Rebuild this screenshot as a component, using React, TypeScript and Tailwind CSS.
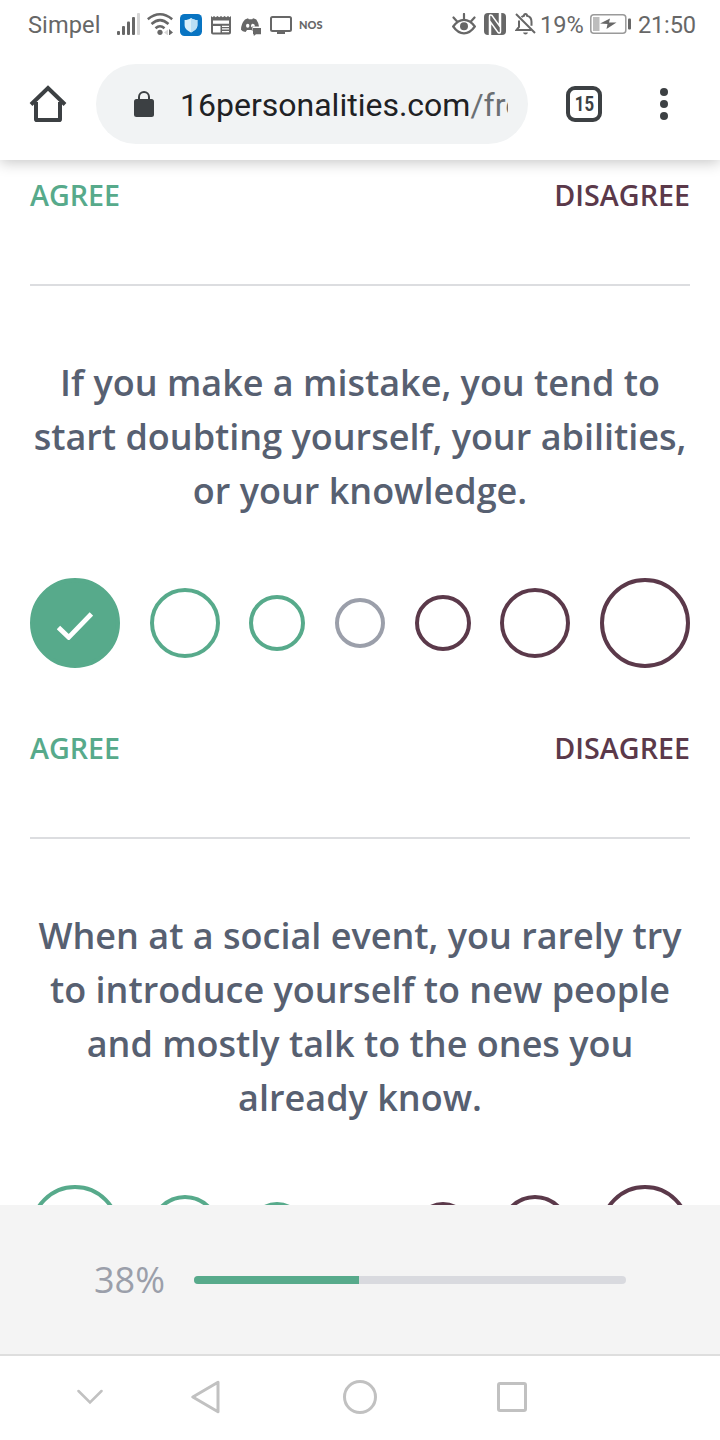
import React from "react";

type Choice = {
  size: string;
  color: string;
};

const choices: Choice[] = [
  { size: "size-[90px]", color: "border-[#57aa8b]" },
  { size: "size-[70px]", color: "border-[#57aa8b]" },
  { size: "size-[56px]", color: "border-[#57aa8b]" },
  { size: "size-[50px]", color: "border-[#9b9faa]" },
  { size: "size-[56px]", color: "border-[#5b394a]" },
  { size: "size-[70px]", color: "border-[#5b394a]" },
  { size: "size-[90px]", color: "border-[#5b394a]" },
];

const StatusBar = () => (
  <div className="flex h-[50px] items-center whitespace-nowrap pl-7 font-['Roboto',sans-serif] text-[23.6px] text-[#676767]">
    <span className="mt-0.5 w-[89px] tracking-[0.1px]">Simpel</span>
    {/* signal */}
    <svg className="w-[23px] h-[22px] shrink-0 -mt-0.5" viewBox="0 0 23 22" fill="#676767">
      <rect x="0" y="18" width="3" height="4" rx="1" />
      <rect x="5" y="13" width="3" height="9" rx="1" />
      <rect x="10" y="8.5" width="3" height="13.5" rx="1" />
      <rect x="15" y="4" width="3" height="18" rx="1" />
      <rect x="20" y="0" width="3" height="22" rx="1" fill="#d5d5d5" />
    </svg>
    {/* wifi */}
    <svg className="ml-[7px] w-[26px] h-[22px] shrink-0 -mt-0.5" viewBox="0 0 26 22" fill="none" stroke="#676767" strokeWidth="2.5">
      <path d="M.8 6.2Q13-3.600 25.2 6.2M4.5 11Q13 3.200 21.5 11M8.5 15.2Q13 11.200 17.5 15.2" />
      <circle cx="13" cy="19.3" r="2.6" fill="#676767" stroke="none" />
      <path d="M17 19.5l4-3v6z" fill="#d5d5d5" stroke="none" />
      <path d="M22 16l4 3.5-4 3z" fill="#676767" stroke="none" />
    </svg>
    {/* shield */}
    <svg className="ml-[7px] size-[22px] shrink-0" viewBox="0 0 22 22">
      <rect width="22" height="22" rx="4.5" fill="#0874c2" />
      <path d="M11 4c2 1.5 4 2 6.4 2v5c0 3.5-2.8 5.8-6.4 7.5C7.400 16.800 4.600 14.500 4.600 11V6C7 6 9 5.500 11 4z" fill="#d9f0fb" />
      <path d="M11 4c2 1.500 4 2 6.400 2v5c0 3.500-2.800 5.800-6.400 7.500z" fill="#b9dff5" />
    </svg>
    {/* news */}
    <svg className="ml-[9px] w-5 h-[19px] shrink-0" viewBox="0 0 20 19">
      <path d="M0 0l1.500 1.200L3 0l1.700 1.200L6.400 0l1.800 1.200L10 0l1.800 1.200L13.600 0l1.700 1.200L17 0l1.500 1.200L20 0v16.500q0 2-2 2H2q-2 0-2-2z" fill="#676767" />
      <path d="M2 4.500h16v3.300H2zM2 10h7.500v6.500H2zM11 9.800h7v1.300h-7zM11 12.300h7v1.300h-7zM11 14.900h7v1.300h-7z" fill="#fff" />
    </svg>
    {/* discord */}
    <svg className="ml-2.5 mt-1 w-5 h-[18px] shrink-0" viewBox="0 0 20 18" fill="#676767">
      <path d="M4 1.500L7 .2l.8 1h3.400l.9-1 3.200 1.200q2.400 3.400 2.700 7.100h-6.500v4.700l-1-1.200H6L4.600 14Q1.300 13.500 0 11.800 0 5.700 4 1.500z" />
      <ellipse cx="6.700" cy="7.700" rx="1.700" ry="2" fill="#fff" />
      <path d="M10 9.500q-.3-3.700 1.800-3.700t2.200 2.700h-3z" fill="#fff" />
      <path d="M12 10h8v6.300h-5L12.800 18v-1.700H12z" />
    </svg>
    {/* screen */}
    <svg className="ml-[9px] w-[22px] h-[18px] shrink-0" viewBox="0 0 22 18" fill="none">
      <rect x="1" y="1" width="20" height="14" rx="1.500" stroke="#676767" strokeWidth="2" />
      <path d="M7 15h8v3H7z" fill="#676767" />
    </svg>
    <span className="ml-[7px] w-[153px] font-['Lato',sans-serif] text-[11px] font-black">NOS</span>
    {/* eye comfort */}
    <svg className="w-6 h-[22px] shrink-0 -mt-0.5" viewBox="0 0 24 22" fill="none" stroke="#676767" strokeWidth="2.200">
      <path d="M1.200 13.500Q6 6.800 12 6.800t10.800 6.700Q18 20.300 12 20.300T1.200 13.500z" />
      <circle cx="12" cy="13.300" r="4" fill="#676767" stroke="none" />
      <path d="M12 1v5M1.500 4.500l3.600 4M22.500 4.500l-3.600 4" strokeLinecap="round" />
    </svg>
    {/* nfc */}
    <svg className="ml-2 size-[22px] shrink-0 -mt-0.5" viewBox="0 0 22 22">
      <rect width="22" height="22" rx="4" fill="#676767" />
      <path d="M5.500 22V3.500Q5.500 1 8 2.500L15.500 13V0M16.500 0V18.500q0 2.500-2.500 1L6.500 9v13" fill="none" stroke="#fff" strokeWidth="1.500" />
    </svg>
    {/* muted bell */}
    <svg className="ml-[9px] w-[21px] h-[22px] shrink-0 -mt-0.5" viewBox="0 0 21 22" fill="none" stroke="#676767" strokeWidth="2">
      <path d="M4 7.500V14l-2.500 3H16M6.500 4.200Q7.500 3 9 2.700 9 1 10.500 1T12 2.700q4.500 1 4.500 6v4M1 1l19 19" />
      <path d="M8 19.500h5q-.5 2-2.500 2t-2.500-2z" fill="#676767" stroke="none" />
    </svg>
    <span className="ml-1 mt-0.5 w-[50px]">19%</span>
    {/* battery */}
    <svg className="w-[41px] h-5 shrink-0 -mt-0.5" viewBox="0 0 41 20" fill="none">
      <rect x=".8" y=".8" width="35" height="18.400" rx="3" stroke="#9a9a9a" strokeWidth="1.500" />
      <rect x="3" y="3" width="6.500" height="14" fill="#bdbdbd" />
      <path d="M10 9.500l10-5-1 4h7.500l-10 6.500 1-5z" fill="#676767" />
      <rect x="38" y="4.500" width="3" height="11" rx="1" fill="#676767" />
    </svg>
    <span className="ml-[7px] mt-0.5 tracking-[-0.2px]">21:50</span>
  </div>
);

const Toolbar = () => (
  <div className="flex h-[110px] items-start pt-3.5 font-['Roboto',sans-serif]">
    <svg className="ml-[29px] mt-[21px] w-[38px] h-[38px] shrink-0" viewBox="0 0 38 38" fill="none" stroke="#3c4043" strokeWidth="4">
      <path d="M7 17v17.200q0 .8.800.8h22.400q.8 0 .8-.8V17" />
      <path d="M2 19.500L19 3l17 16.500" />
    </svg>
    <div className="ml-[29px] flex h-20 w-[432px] shrink-0 items-center rounded-full bg-[#f1f3f4] pl-[38px]">
      <svg className="w-5 h-[26px] shrink-0" viewBox="0 0 20 26">
        <path d="M5 9V6a5 5 0 0 1 10 0v3" fill="none" stroke="#3c4043" strokeWidth="2" />
        <rect y="8" width="20" height="18" rx="2.500" fill="#3c4043" />
      </svg>
      <div className="ml-[26px] mt-0.5 w-[328px] overflow-hidden whitespace-nowrap text-[32px] leading-10 text-[#202124]">
        16personalities.com<span className="text-[#6b6f73]">/fre</span>
      </div>
    </div>
    <div className="ml-[38px] mt-[22px] flex size-9 shrink-0 items-center justify-center rounded-[9px] border-4 border-[#3c4043] text-[20px] font-bold text-[#3c4043]">
      <span className="scale-x-[0.84]">15</span>
    </div>
    <div className="ml-[58px] mt-6 flex flex-col gap-1">
      <i className="size-2 rounded-full bg-[#3c4043]" />
      <i className="size-2 rounded-full bg-[#3c4043]" />
      <i className="size-2 rounded-full bg-[#3c4043]" />
    </div>
  </div>
);

const Captions = () => (
  <div className="flex h-[44px] items-center justify-between text-[28.7px] font-semibold">
    <span className="text-[#57aa8b]">AGREE</span>
    <span className="text-[#5b394a]">DISAGREE</span>
  </div>
);

const Choices = ({ selected }: { selected?: number }) => (
  <div className="flex items-center justify-between">
    {choices.map((item, index) => (
      <button
        key={index}
        className={`${item.size} ${item.color} flex shrink-0 items-center justify-center rounded-full border-4 ${
          index === selected ? "bg-[#57aa8b]" : ""
        }`}
      >
        {index === selected && (
          <svg className="mt-1.5 w-9 h-7 shrink-0" viewBox="0 0 36 28" fill="none">
            <path d="M1.500 15.500l10.200 9.800L34.400 1.900" stroke="#fff" strokeWidth="4.800" />
          </svg>
        )}
      </button>
    ))}
  </div>
);

const Question = ({ lines }: { lines: string[] }) => (
  <h2 className="mb-[60px] text-center text-[36px] font-semibold leading-[54px] text-[#576071]">
    {lines.map((line) => (
      <span key={line} className="block whitespace-nowrap">
        {line}
      </span>
    ))}
  </h2>
);

const App = () => {
  const progress = 38.2;

  return (
    <div className="flex h-[1440px] w-[720px] flex-col overflow-hidden bg-white font-['Open_Sans',sans-serif]">
      <header className="relative z-10 h-40 shrink-0 bg-white shadow-[0_2px_14px_rgba(0,0,0,0.24)]">
        <StatusBar />
        <Toolbar />
      </header>

      <main className="h-[1045px] shrink-0 overflow-hidden px-[30px] pt-[13px]">
        <Captions />
        <hr className="mt-[67px] mb-[70px] border-t-2 border-[#dcdde0]" />
        <Question
          lines={[
            "If you make a mistake, you tend to",
            "start doubting yourself, your abilities,",
            "or your knowledge.",
          ]}
        />
        <Choices selected={0} />
        <div className="h-[58px]" />
        <Captions />
        <hr className="mt-[67px] mb-[70px] border-t-2 border-[#dcdde0]" />
        <Question
          lines={[
            "When at a social event, you rarely try",
            "to introduce yourself to new people",
            "and mostly talk to the ones you",
            "already know.",
          ]}
        />
        <Choices />
      </main>

      <div className="flex h-[149px] shrink-0 items-center bg-[#f4f4f4] pl-[94px]">
        <span className="w-[100px] text-[36px] text-[#9b9faa]">{Math.floor(progress)}%</span>
        <div className="h-2 w-[432px] overflow-hidden rounded-full bg-[#d9dadf]">
          <div className="h-full bg-[#57aa8b]" style={{ width: `${progress}%` }} />
        </div>
      </div>

      <nav className="flex h-[86px] shrink-0 items-center border-t-2 border-[#dedede] pb-0.5">
        <svg className="ml-[77px] w-[26px] h-4" viewBox="0 0 26 16" fill="none" stroke="#c1c1c1" strokeWidth="2.500">
          <path d="M1.500 2L13 13.500 24.500 2" strokeLinecap="round" />
        </svg>
        <svg className="ml-[88px] w-[30px] h-[34px]" viewBox="0 0 30 34" fill="none" stroke="#c1c1c1" strokeWidth="3">
          <path d="M1.800 17L27 2.200v29.600z" strokeLinejoin="round" />
        </svg>
        <div className="ml-[122px] size-[34px] rounded-full border-[3px] border-[#c1c1c1]" />
        <div className="ml-[120px] size-[30px] rounded-[3px] border-[3px] border-[#c1c1c1]" />
      </nav>
    </div>
  );
};

export default App;
